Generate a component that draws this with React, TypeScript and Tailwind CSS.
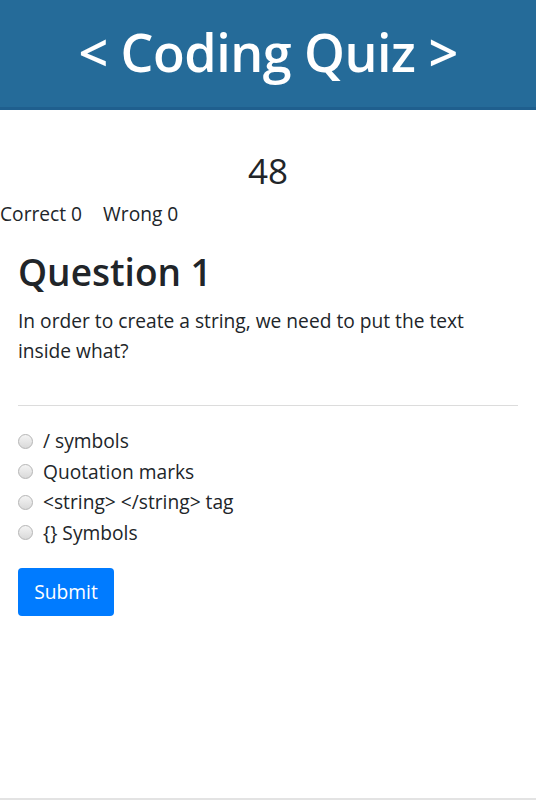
import React from "react";

const font = { fontFamily: '"Open Sans", "Noto Sans", sans-serif' };

function Radio() {
  return (
    <span className="inline-block w-[15px] h-[15px] rounded-full border border-[#b5b5b5] bg-[linear-gradient(180deg,#f4f4f4,#d9d9d9)] shrink-0" />
  );
}

export default function App() {
  const options = ["/ symbols", "Quotation marks", "<string> </string> tag", "{} Symbols"];
  return (
    <div className="h-[800px] bg-white text-[#212529] flex flex-col border-b-2 border-[#e3e3e3]" style={font}>
      <header className="h-[110px] bg-[#256b99] border-b-[3px] border-[#1f5f8e] flex items-center justify-center shrink-0">
        <h1 className="text-white text-[52px] font-semibold leading-none tracking-[-0.5px] pb-[4px]">&lt; Coding Quiz &gt;</h1>
      </header>
      <div className="text-center text-[35px] leading-none mt-[43px]">48</div>
      <div className="text-[19.2px] leading-none mt-[16px] flex gap-[21px]">
        <span>Correct 0</span>
        <span>Wrong 0</span>
      </div>
      <div className="px-[18px]">
        <h2 className="text-[37px] font-semibold leading-none mt-[30px]">Question 1</h2>
        <p className="text-[19.2px] leading-[30px] mt-[16px]">
          In order to create a string, we need to put the text inside what?
        </p>
        <hr className="mt-[39px] border-t border-[#dcdcdc]" />
        <div className="mt-[20px] flex flex-col">
          {options.map((o) => (
            <label key={o} className="flex items-center gap-[10px] h-[30.5px] text-[19.2px]">
              <Radio />
              <span>{o}</span>
            </label>
          ))}
        </div>
        <button className="mt-[20px] w-[96px] h-[48px] rounded-[4px] bg-[#007bff] text-white text-[19.2px]">Submit</button>
      </div>
    </div>
  );
}
